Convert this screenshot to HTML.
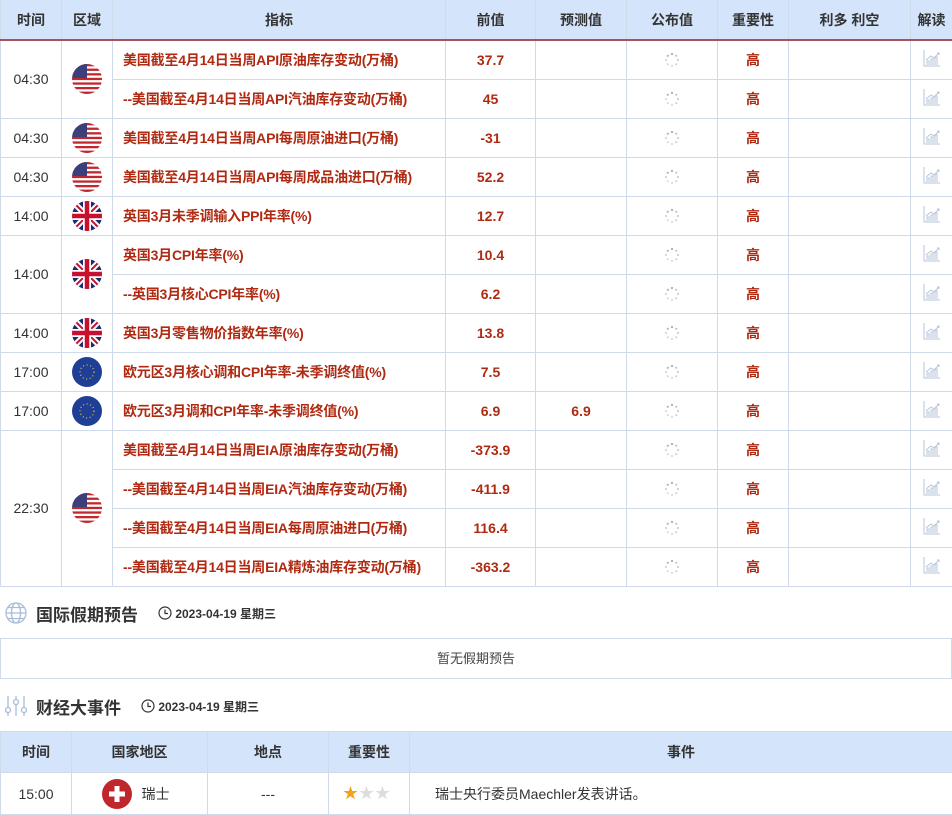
<!DOCTYPE html>
<html><head><meta charset="utf-8">
<style>
*{margin:0;padding:0;box-sizing:border-box}
body{width:952px;height:813px;background:#fff;font-family:"Liberation Sans","Noto Sans CJK SC",sans-serif;font-size:14px;color:#333;overflow:hidden;position:relative}
table{border-collapse:collapse;table-layout:fixed;position:absolute;left:0}
td,th{border:1px solid #cfdbea;text-align:center;vertical-align:middle;padding:0;line-height:16px}
th{background:#d4e5fb;font-weight:bold;color:#333;font-size:14px}
#t1{top:0;width:952px}
#t1 th{height:40px;border-bottom:2px solid #a8525a;border-top:none}
#t1 td{height:39px}
.ind{text-align:left;padding-left:10px;color:#b02a12;font-weight:bold;font-size:14px;white-space:nowrap;letter-spacing:-0.2px}
.red{color:#b02a12;font-weight:bold}
.flag{width:30px;height:30px;display:block;margin:0 auto}
.spin{display:block;margin:0 auto;width:16px;height:16px}
.sec{position:absolute;left:0;display:flex;align-items:center;height:30px}
.sec .tt{font-size:17px;font-weight:bold;color:#333;margin-left:6px}
.sec .dt{font-size:12px;font-weight:bold;color:#333;margin-left:20px;display:flex;align-items:center}
#hol{position:absolute;top:638px;left:0;width:952px;height:41px;border:1px solid #cfdbea;text-align:center;line-height:40px;font-size:13px;color:#444}
#t2{top:731px;width:952px}
#t2 th{height:41px;font-size:14px}
#t2 td{height:42px;font-size:14px}
</style></head><body>
<svg width="0" height="0" style="position:absolute">
<defs>
<clipPath id="c"><circle cx="15" cy="15" r="15"/></clipPath>
<g id="us"><g clip-path="url(#c)"><rect width="30" height="30" fill="#fff"/>
<rect y="0" width="30" height="2.3" fill="#c0282f"/><rect y="4.6" width="30" height="2.3" fill="#c0282f"/><rect y="9.2" width="30" height="2.3" fill="#c0282f"/><rect y="13.8" width="30" height="2.3" fill="#c0282f"/><rect y="18.4" width="30" height="2.3" fill="#c0282f"/><rect y="23" width="30" height="2.3" fill="#c0282f"/><rect y="27.6" width="30" height="2.4" fill="#c0282f"/>
<rect width="15" height="14" fill="#3b3f7a"/></g></g>
<g id="uk"><g clip-path="url(#c)"><rect width="30" height="30" fill="#1f2a6e"/>
<path d="M0 0L30 30M30 0L0 30" stroke="#fff" stroke-width="6"/><path d="M0 0L30 30M30 0L0 30" stroke="#c8102e" stroke-width="2"/>
<path d="M15 0V30M0 15H30" stroke="#fff" stroke-width="8"/><path d="M15 0V30M0 15H30" stroke="#c8102e" stroke-width="4.5"/></g></g>
<g id="eu"><circle cx="15" cy="15" r="15" fill="#1f3f96"/><circle cx="15" cy="15" r="7" fill="none" stroke="#e8c94a" stroke-width="1.2" stroke-dasharray="1 2.6"/></g>
<g id="sp"><g fill="#aab"><circle cx="8" cy="2" r="1.1"/><circle cx="12.2" cy="3.8" r="1" opacity=".8"/><circle cx="14" cy="8" r="1" opacity=".7"/><circle cx="12.2" cy="12.2" r="1" opacity=".6"/><circle cx="8" cy="14" r="1" opacity=".5"/><circle cx="3.8" cy="12.2" r="1" opacity=".5"/><circle cx="2" cy="8" r="1" opacity=".6"/><circle cx="3.8" cy="3.8" r="1.1" opacity=".9"/></g></g>
<g id="ch"><path d="M2 2V18H18" fill="none" stroke="#b8c4d8" stroke-width="1"/><path d="M5 17V13h2v4M9 17v-6h2v6M13 17V9h2v8" fill="none" stroke="#b8c4d8" stroke-width="1"/><path d="M4 12L9 8l3 2 5-5M15 5h2v2" fill="none" stroke="#b8c4d8" stroke-width="1"/></g>
</defs></svg>
<table id="t1">
<colgroup><col style="width:61px"><col style="width:51px"><col style="width:333px"><col style="width:90px"><col style="width:91px"><col style="width:91px"><col style="width:71px"><col style="width:122px"><col style="width:42px"></colgroup>
<tr><th>时间</th><th>区域</th><th>指标</th><th>前值</th><th>预测值</th><th>公布值</th><th>重要性</th><th>利多 利空</th><th>解读</th></tr>
<tr><td rowspan="2">04:30</td><td rowspan="2"><svg class="flag"><use href="#us"/></svg></td><td class="ind">美国截至4月14日当周API原油库存变动(万桶)</td><td class="red">37.7</td><td></td><td><svg class="spin"><use href="#sp"/></svg></td><td class="red">高</td><td></td><td><svg width="20" height="20"><use href="#ch"/></svg></td></tr>
<tr><td class="ind">--美国截至4月14日当周API汽油库存变动(万桶)</td><td class="red">45</td><td></td><td><svg class="spin"><use href="#sp"/></svg></td><td class="red">高</td><td></td><td><svg width="20" height="20"><use href="#ch"/></svg></td></tr>
<tr><td>04:30</td><td><svg class="flag"><use href="#us"/></svg></td><td class="ind">美国截至4月14日当周API每周原油进口(万桶)</td><td class="red">-31</td><td></td><td><svg class="spin"><use href="#sp"/></svg></td><td class="red">高</td><td></td><td><svg width="20" height="20"><use href="#ch"/></svg></td></tr>
<tr><td>04:30</td><td><svg class="flag"><use href="#us"/></svg></td><td class="ind">美国截至4月14日当周API每周成品油进口(万桶)</td><td class="red">52.2</td><td></td><td><svg class="spin"><use href="#sp"/></svg></td><td class="red">高</td><td></td><td><svg width="20" height="20"><use href="#ch"/></svg></td></tr>
<tr><td>14:00</td><td><svg class="flag"><use href="#uk"/></svg></td><td class="ind">英国3月未季调输入PPI年率(%)</td><td class="red">12.7</td><td></td><td><svg class="spin"><use href="#sp"/></svg></td><td class="red">高</td><td></td><td><svg width="20" height="20"><use href="#ch"/></svg></td></tr>
<tr><td rowspan="2">14:00</td><td rowspan="2"><svg class="flag"><use href="#uk"/></svg></td><td class="ind">英国3月CPI年率(%)</td><td class="red">10.4</td><td></td><td><svg class="spin"><use href="#sp"/></svg></td><td class="red">高</td><td></td><td><svg width="20" height="20"><use href="#ch"/></svg></td></tr>
<tr><td class="ind">--英国3月核心CPI年率(%)</td><td class="red">6.2</td><td></td><td><svg class="spin"><use href="#sp"/></svg></td><td class="red">高</td><td></td><td><svg width="20" height="20"><use href="#ch"/></svg></td></tr>
<tr><td>14:00</td><td><svg class="flag"><use href="#uk"/></svg></td><td class="ind">英国3月零售物价指数年率(%)</td><td class="red">13.8</td><td></td><td><svg class="spin"><use href="#sp"/></svg></td><td class="red">高</td><td></td><td><svg width="20" height="20"><use href="#ch"/></svg></td></tr>
<tr><td>17:00</td><td><svg class="flag"><use href="#eu"/></svg></td><td class="ind">欧元区3月核心调和CPI年率-未季调终值(%)</td><td class="red">7.5</td><td></td><td><svg class="spin"><use href="#sp"/></svg></td><td class="red">高</td><td></td><td><svg width="20" height="20"><use href="#ch"/></svg></td></tr>
<tr><td>17:00</td><td><svg class="flag"><use href="#eu"/></svg></td><td class="ind">欧元区3月调和CPI年率-未季调终值(%)</td><td class="red">6.9</td><td class="red">6.9</td><td><svg class="spin"><use href="#sp"/></svg></td><td class="red">高</td><td></td><td><svg width="20" height="20"><use href="#ch"/></svg></td></tr>
<tr><td rowspan="4">22:30</td><td rowspan="4"><svg class="flag"><use href="#us"/></svg></td><td class="ind">美国截至4月14日当周EIA原油库存变动(万桶)</td><td class="red">-373.9</td><td></td><td><svg class="spin"><use href="#sp"/></svg></td><td class="red">高</td><td></td><td><svg width="20" height="20"><use href="#ch"/></svg></td></tr>
<tr><td class="ind">--美国截至4月14日当周EIA汽油库存变动(万桶)</td><td class="red">-411.9</td><td></td><td><svg class="spin"><use href="#sp"/></svg></td><td class="red">高</td><td></td><td><svg width="20" height="20"><use href="#ch"/></svg></td></tr>
<tr><td class="ind">--美国截至4月14日当周EIA每周原油进口(万桶)</td><td class="red">116.4</td><td></td><td><svg class="spin"><use href="#sp"/></svg></td><td class="red">高</td><td></td><td><svg width="20" height="20"><use href="#ch"/></svg></td></tr>
<tr><td class="ind">--美国截至4月14日当周EIA精炼油库存变动(万桶)</td><td class="red">-363.2</td><td></td><td><svg class="spin"><use href="#sp"/></svg></td><td class="red">高</td><td></td><td><svg width="20" height="20"><use href="#ch"/></svg></td></tr>
</table>

<div class="sec" style="top:598px;left:5px">
<svg width="22" height="22" viewBox="0 0 22 22" fill="none" stroke="#a9bcd8" stroke-width="1.3"><circle cx="11" cy="11" r="10"/><ellipse cx="11" cy="11" rx="4.5" ry="10"/><path d="M1 11H21M3 5.5H19M3 16.5H19"/></svg>
<span class="tt" style="margin-left:9px">国际假期预告</span>
<span class="dt"><svg width="14" height="14" viewBox="0 0 14 14" fill="none" stroke="#333" stroke-width="1.2"><circle cx="7" cy="7" r="6"/><path d="M7 3.5V7.5H10"/></svg>&nbsp;2023-04-19 星期三</span>
</div>
<div id="hol">暂无假期预告</div>

<div class="sec" style="top:691px;left:5px">
<svg width="22" height="22" viewBox="0 0 22 22" fill="none" stroke="#a9bcd8" stroke-width="1.3"><path d="M3 1V12M3 18V21M11 1V4M11 10V21M19 1V12M19 18V21"/><circle cx="3" cy="15" r="2.5"/><circle cx="11" cy="7" r="2.5"/><circle cx="19" cy="15" r="2.5"/></svg>
<span class="tt" style="margin-left:9px">财经大事件</span>
<span class="dt"><svg width="14" height="14" viewBox="0 0 14 14" fill="none" stroke="#333" stroke-width="1.2"><circle cx="7" cy="7" r="6"/><path d="M7 3.5V7.5H10"/></svg>&nbsp;2023-04-19 星期三</span>
</div>

<table id="t2">
<colgroup><col style="width:71px"><col style="width:136px"><col style="width:121px"><col style="width:81px"><col style="width:543px"></colgroup>
<tr><th>时间</th><th>国家地区</th><th>地点</th><th>重要性</th><th>事件</th></tr>
<tr><td>15:00</td><td><div style="display:flex;align-items:center;justify-content:center;gap:10px;margin-left:-8px"><svg width="30" height="30" viewBox="0 0 30 30"><circle cx="15" cy="15" r="15" fill="#c0272d"/><path d="M12.5 7h5v5.5H23v5h-5.5V23h-5v-5.5H7v-5h5.5z" fill="#fff"/></svg><span>瑞士</span></div></td><td>---</td><td style="text-align:left;padding-left:14px;font-size:15px;letter-spacing:1px"><span style="color:#f2a21b">★</span><span style="color:#ddd">★★</span></td><td style="text-align:left;padding-left:25px">瑞士央行委员Maechler发表讲话。</td></tr>
</table>
</body></html>
